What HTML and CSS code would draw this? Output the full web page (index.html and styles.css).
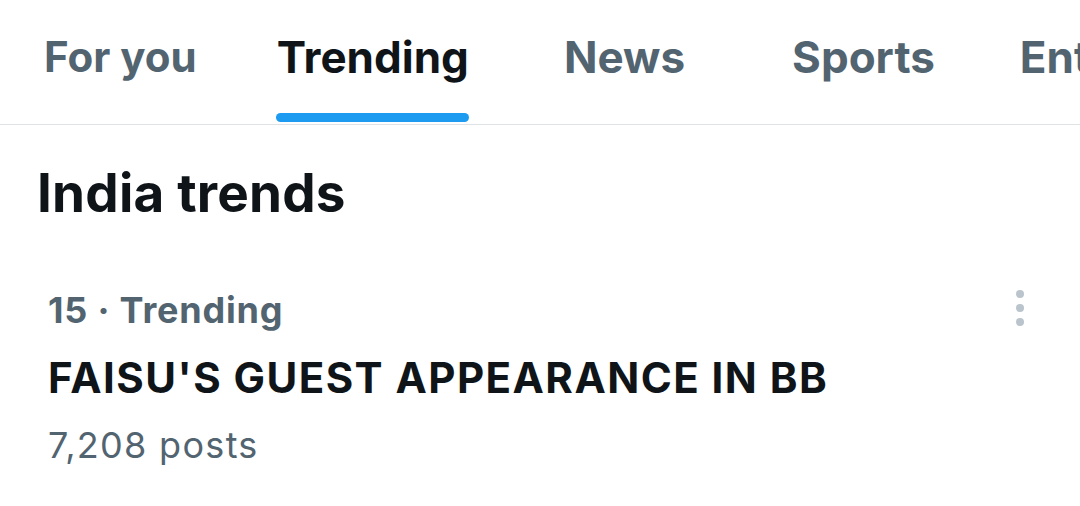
FILE: index.html
```html
<!DOCTYPE html>
<html>
<head>
<meta charset="utf-8">
<link rel="stylesheet" href="styles.css">
</head>
<body>
<nav class="tabs">
  <div class="tab t1">For you</div>
  <div class="tab t2 active">Trending</div>
  <div class="tab t3">News</div>
  <div class="tab t4">Sports</div>
  <div class="tab t5">Entertainment</div>
</nav>
<h1 class="section">India trends</h1>
<div class="trend">
  <div class="trend-body">
    <div class="meta">15 · Trending</div>
    <div class="title">FAISU'S GUEST APPEARANCE IN BB</div>
    <div class="count">7,208 posts</div>
  </div>
  <div class="more"><span></span><span></span><span></span></div>
</div>
</body>
</html>
```
FILE: styles.css
```css
html, body {
  margin: 0;
  padding: 0;
  background: #fff;
  width: 1080px;
  height: 506px;
  overflow: hidden;
  font-family: Inter, "Noto Sans", sans-serif;
}
.tabs {
  display: flex;
  height: 125px;
  border-bottom: 1px solid #dfe3e6;
  white-space: nowrap;
  overflow: hidden;
  box-sizing: border-box;
  padding-left: 44px;
}
.tab {
  position: relative;
  font-size: 44px;
  font-weight: 700;
  color: #536471;
  padding-top: 32px;
  line-height: 50px;
  flex: none;
}
.t1 { font-size: 42px; margin-right: 80px; }
.t2 { margin-right: 95px; }
.t3 { margin-right: 107px; }
.t4 { margin-right: 85px; }
.tab.active { color: #0f1419; }
.tab.active::after {
  content: "";
  position: absolute;
  left: -1px;
  right: 0;
  top: 113px;
  height: 9px;
  border-radius: 5px;
  background: #1d9bf0;
}
.section {
  margin: 0;
  padding: 38px 0 0 37px;
  font-size: 53px;
  font-weight: 700;
  color: #0f1419;
  line-height: 60px;
  letter-spacing: 0.2px;
}
.trend {
  display: flex;
  justify-content: space-between;
  padding: 0 0 0 48px;
  margin-top: 62px;
}
.meta {
  font-size: 36px;
  font-weight: 700;
  color: #536471;
  line-height: 50px;
  letter-spacing: 0.8px;
}
.title {
  font-size: 42px;
  font-weight: 700;
  color: #0f1419;
  line-height: 50px;
  margin-top: 18px;
  letter-spacing: 1.45px;
}
.count {
  font-size: 36px;
  font-weight: 400;
  color: #536471;
  line-height: 50px;
  margin-top: 17px;
  letter-spacing: 1.3px;
}
.more {
  display: flex;
  flex-direction: column;
  gap: 6px;
  width: 8px;
  margin-right: 56px;
  padding-top: 5px;
}
.more span {
  width: 8px;
  height: 8px;
  border-radius: 50%;
  background: #b9c4cc;
}
```
